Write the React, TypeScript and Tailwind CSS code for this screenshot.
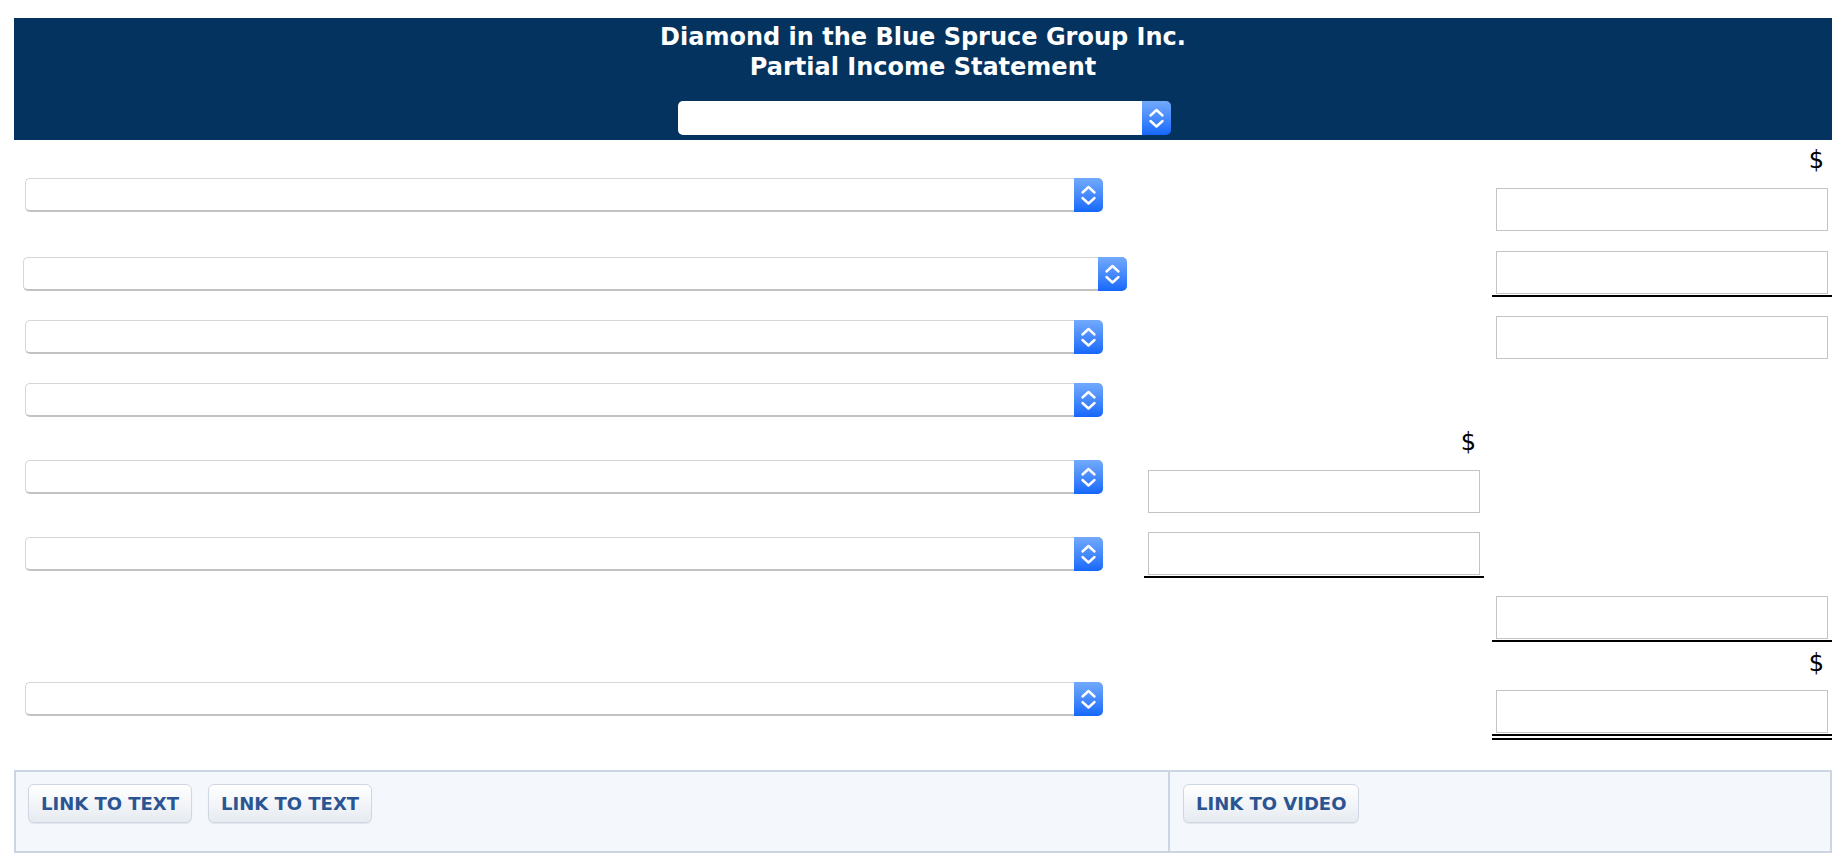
import React from "react";

const Chev = () => (
  <svg width="29" height="34" viewBox="0 0 29 34" fill="none" stroke="white" strokeWidth="2.4" strokeLinecap="round" strokeLinejoin="round">
    <polyline points="8.5,14.5 14.5,9 20.5,14.5" />
    <polyline points="8.5,20 14.5,25.5 20.5,20" />
  </svg>
);

function Sel({ className = "" }: { className?: string }) {
  return (
    <div className={"flex h-[34px] " + className}>
      <div className="flex-1 rounded-l-[5px] border-l border-t border-b-2 border-[#d6d6d6] border-b-[#c2c2c2] bg-white" />
      <div className="w-[29px] h-[34px] rounded-r-[5px] bg-linear-to-b from-[#72a9fb] to-[#1467fb] flex items-center justify-center">
        <Chev />
      </div>
    </div>
  );
}

function HeaderSel() {
  return (
    <div className="flex h-[34px] w-[493px]">
      <div className="flex-1 rounded-l-[5px] bg-white" />
      <div className="w-[29px] h-[34px] rounded-r-[5px] bg-linear-to-b from-[#72a9fb] to-[#1467fb] flex items-center justify-center">
        <Chev />
      </div>
    </div>
  );
}

const Inp = () => <div className="h-[43px] w-[332px] border border-[#c4c4c4] bg-white" />;
const Dollar = () => (
  <div className="h-[24px] text-[24px] leading-[24px] text-right pr-[4px] text-black font-['DejaVu_Sans',sans-serif]">$</div>
);

function Row({
  left,
  mid,
  right,
}: {
  left?: React.ReactNode;
  mid?: React.ReactNode;
  right?: React.ReactNode;
}) {
  return (
    <div className="flex items-start">
      <div className="w-[1130px]">{left}</div>
      <div className="w-[340px]">{mid}</div>
      <div className="w-[340px] ml-[8px]">{right}</div>
    </div>
  );
}

function Btn({ children }: { children: React.ReactNode }) {
  return (
    <div className="h-[39px] px-[12px] rounded-[6px] border border-[#cfd8e2] bg-linear-to-b from-white to-[#e6ebf1] shadow-[0_1px_1px_rgba(0,0,0,0.08)] flex items-center text-[#2b5592] font-bold text-[18px] font-['DejaVu_Sans',sans-serif] whitespace-nowrap">
      {children}
    </div>
  );
}

export default function App() {
  return (
    <div className="bg-white min-h-[866px] pt-[18px] font-['DejaVu_Sans',sans-serif]">
      <div className="ml-[14px] w-[1818px]">
        {/* Header */}
        <div className="bg-[#04335f] pt-[4px] pb-[5px] flex flex-col items-center">
          <div className="text-white font-bold text-[24px] leading-[30px] text-center">
            <div>Diamond in the Blue Spruce Group Inc.</div>
            <div>Partial Income Statement</div>
          </div>
          <div className="mt-[19px] ml-[3px]">
            <HeaderSel />
          </div>
        </div>

        {/* R1 */}
        <Row
          left={<div className="pl-[11px] pt-[38px]"><Sel className="w-[1078px]" /></div>}
          right={
            <div className="pt-[8px] px-[4px]">
              <Dollar />
              <div className="mt-[16px]"><Inp /></div>
            </div>
          }
        />
        {/* R2 */}
        <Row
          left={<div className="pl-[9px] pt-[26px]"><Sel className="w-[1104px]" /></div>}
          right={
            <div className="pt-[20px] pb-[1px] border-b-2 border-black px-[4px]">
              <Inp />
            </div>
          }
        />
        {/* R3 */}
        <Row
          left={<div className="pl-[11px] pt-[23px]"><Sel className="w-[1078px]" /></div>}
          right={<div className="pt-[19px] px-[4px]"><Inp /></div>}
        />
        {/* R4 */}
        <Row left={<div className="pl-[11px] pt-[24px]"><Sel className="w-[1078px]" /></div>} />
        {/* R5 */}
        <Row
          left={<div className="pl-[11px] pt-[43px]"><Sel className="w-[1078px]" /></div>}
          mid={
            <div className="pt-[13px] px-[4px]">
              <Dollar />
              <div className="mt-[16px]"><Inp /></div>
            </div>
          }
        />
        {/* R6 */}
        <Row
          left={<div className="pl-[11px] pt-[24px]"><Sel className="w-[1078px]" /></div>}
          mid={
            <div className="pt-[19px] pb-[1px] border-b-2 border-black px-[4px]">
              <Inp />
            </div>
          }
        />
        {/* R7 */}
        <Row
          right={
            <div className="pt-[18px] pb-[1px] border-b-2 border-black px-[4px]">
              <Inp />
            </div>
          }
        />
        {/* R8 */}
        <Row
          left={<div className="pl-[11px] pt-[40px]"><Sel className="w-[1078px]" /></div>}
          right={
            <div className="pt-[9px] pb-[1px] border-b-[6px] border-double border-black px-[4px]">
              <Dollar />
              <div className="mt-[15px]"><Inp /></div>
            </div>
          }
        />

        {/* Footer */}
        <div className="mt-[30px] h-[83px] border-2 border-[#ccd6e2] bg-[#f4f7fb] flex">
          <div className="w-[1152px] pt-[12px] pl-[12px] flex items-start gap-[16px]">
            <Btn>LINK TO TEXT</Btn>
            <Btn>LINK TO TEXT</Btn>
          </div>
          <div className="flex-1 border-l-2 border-[#ccd6e2] pt-[12px] pl-[13px] flex items-start">
            <Btn>LINK TO VIDEO</Btn>
          </div>
        </div>
      </div>
    </div>
  );
}
